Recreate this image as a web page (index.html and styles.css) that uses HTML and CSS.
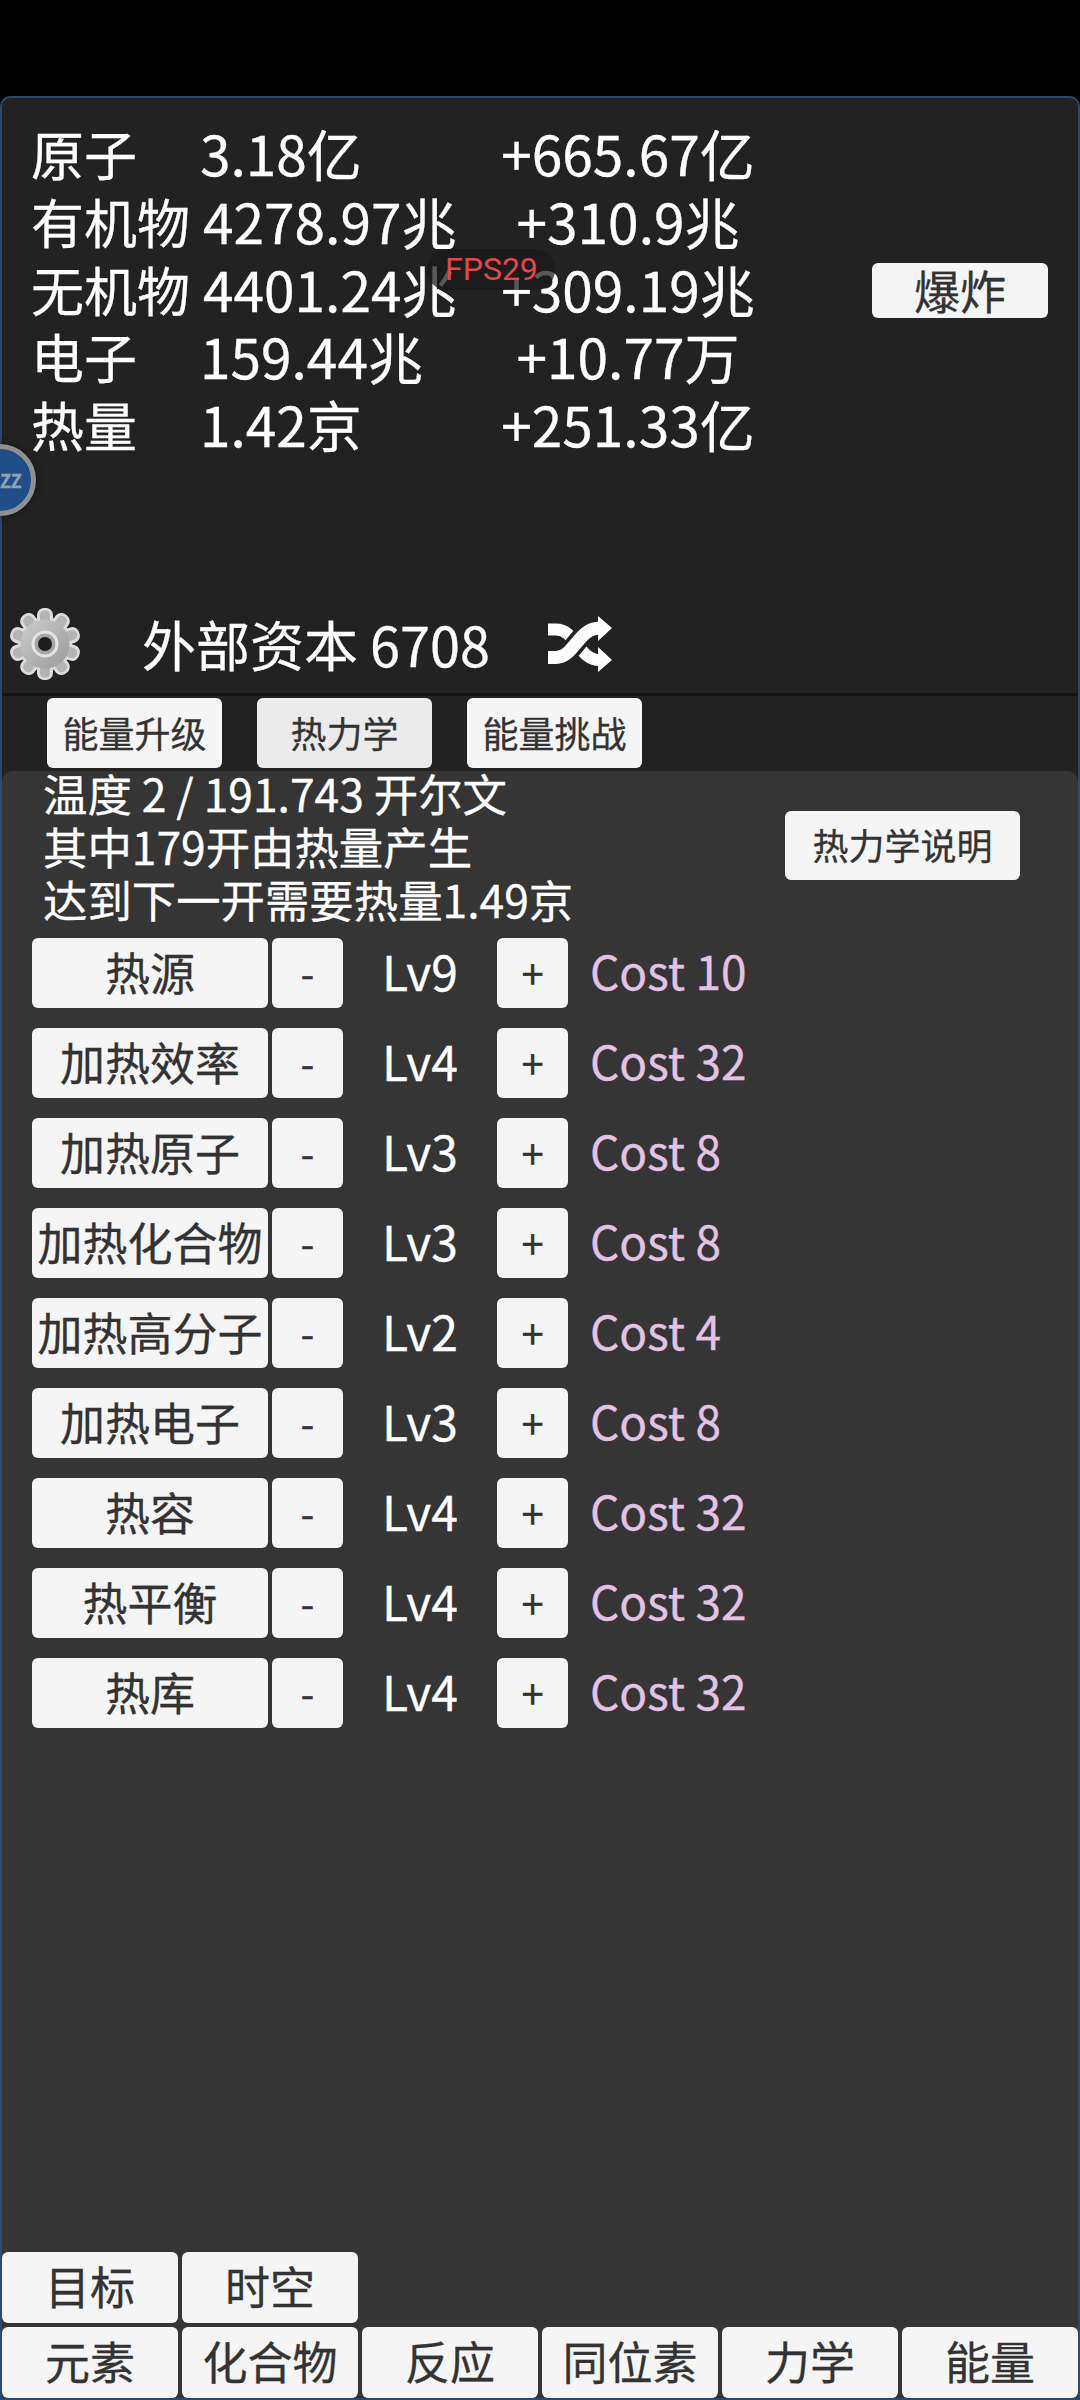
FILE: index.html
```html
<!DOCTYPE html>
<html lang="zh-CN">
<head>
    <meta charset="UTF-8">
    <title>热力学</title>
    <link rel="stylesheet" href="styles.css">
</head>
<body>

<div class="status-bar"></div>

<div class="game">
    <!-- Resources -->
    <div class="resources">
        <div class="res-table">
            <span>原子</span><span class="val">3.18亿</span><span class="val rate">+665.67亿</span>
            <span>有机物</span><span class="val wide">4278.97兆</span><span class="val rate">+310.9兆</span>
            <span>无机物</span><span class="val wide">4401.24兆</span><span class="val rate">+309.19兆</span>
            <span>电子</span><span class="val">159.44兆</span><span class="val rate">+10.77万</span>
            <span>热量</span><span class="val">1.42京</span><span class="val rate">+251.33亿</span>
        </div>
        <button class="btn btn-explode">爆炸</button>
    </div>

    <!-- External capital -->
    <div class="capital">
        <svg class="gear" viewBox="0 0 72 74">
            <defs>
                <linearGradient id="gearFill" x1="0" y1="0" x2="1" y2="1">
                    <stop offset="0" stop-color="#cdcdcd"/>
                    <stop offset="1" stop-color="#9a9a9a"/>
                </linearGradient>
                <rect id="toothOut" x="28" y="1" width="16" height="20" rx="7" fill="#dcdcdc"/>
                <rect id="toothIn" x="31" y="3.5" width="10" height="20" rx="4.5" fill="#b4b4b4"/>
            </defs>
            <use href="#toothOut"/>
            <use href="#toothOut" transform="rotate(36 36 37)"/>
            <use href="#toothOut" transform="rotate(72 36 37)"/>
            <use href="#toothOut" transform="rotate(108 36 37)"/>
            <use href="#toothOut" transform="rotate(144 36 37)"/>
            <use href="#toothOut" transform="rotate(180 36 37)"/>
            <use href="#toothOut" transform="rotate(216 36 37)"/>
            <use href="#toothOut" transform="rotate(252 36 37)"/>
            <use href="#toothOut" transform="rotate(288 36 37)"/>
            <use href="#toothOut" transform="rotate(324 36 37)"/>
            <circle cx="36" cy="37" r="27" fill="#dcdcdc"/>
            <use href="#toothIn"/>
            <use href="#toothIn" transform="rotate(36 36 37)"/>
            <use href="#toothIn" transform="rotate(72 36 37)"/>
            <use href="#toothIn" transform="rotate(108 36 37)"/>
            <use href="#toothIn" transform="rotate(144 36 37)"/>
            <use href="#toothIn" transform="rotate(180 36 37)"/>
            <use href="#toothIn" transform="rotate(216 36 37)"/>
            <use href="#toothIn" transform="rotate(252 36 37)"/>
            <use href="#toothIn" transform="rotate(288 36 37)"/>
            <use href="#toothIn" transform="rotate(324 36 37)"/>
            <circle cx="36" cy="37" r="24.5" fill="url(#gearFill)"/>
            <circle cx="36" cy="37" r="12" fill="#a4a4a4" stroke="#e4e4e4" stroke-width="3"/>
            <circle cx="36" cy="37" r="7" fill="#1c1c1c"/>
        </svg>
        <span class="capital-text">外部资本 6708</span>
        <svg class="shuffle" viewBox="0 0 64 56">
            <path d="M0 13.5 H8 C28 13.5 30 44 52 44" fill="none" stroke="#fff" stroke-width="12"/>
            <path d="M0 41.5 H8 C26 41.5 30 12 52 12" fill="none" stroke="#222" stroke-width="20"/>
            <path d="M0 41.5 H8 C26 41.5 30 12 52 12" fill="none" stroke="#fff" stroke-width="13"/>
            <polygon points="50,0 64,12 50,25" fill="#fff"/>
            <polygon points="50,31 64,44 50,56" fill="#fff"/>
        </svg>
    </div>

    <!-- Energy tabs -->
    <div class="subtabs">
        <button class="btn btn-subtab">能量升级</button>
        <button class="btn btn-subtab active">热力学</button>
        <button class="btn btn-subtab">能量挑战</button>
    </div>

    <div class="content">
        <div class="intro">
            <div class="intro-text">
                <div>温度 2 / 191.743 开尔文</div>
                <div>其中179开由热量产生</div>
                <div>达到下一开需要热量1.49京</div>
            </div>
            <button class="btn btn-help">热力学说明</button>
        </div>

        <div class="upgrades">
            <div class="upgrade">
                <button class="btn btn-name">热源</button>
                <button class="btn btn-step minus">-</button>
                <span class="level">Lv9</span>
                <button class="btn btn-step">+</button>
                <span class="cost">Cost 10</span>
            </div>
            <div class="upgrade">
                <button class="btn btn-name">加热效率</button>
                <button class="btn btn-step minus">-</button>
                <span class="level">Lv4</span>
                <button class="btn btn-step">+</button>
                <span class="cost">Cost 32</span>
            </div>
            <div class="upgrade">
                <button class="btn btn-name">加热原子</button>
                <button class="btn btn-step minus">-</button>
                <span class="level">Lv3</span>
                <button class="btn btn-step">+</button>
                <span class="cost">Cost 8</span>
            </div>
            <div class="upgrade">
                <button class="btn btn-name">加热化合物</button>
                <button class="btn btn-step minus">-</button>
                <span class="level">Lv3</span>
                <button class="btn btn-step">+</button>
                <span class="cost">Cost 8</span>
            </div>
            <div class="upgrade">
                <button class="btn btn-name">加热高分子</button>
                <button class="btn btn-step minus">-</button>
                <span class="level">Lv2</span>
                <button class="btn btn-step">+</button>
                <span class="cost">Cost 4</span>
            </div>
            <div class="upgrade">
                <button class="btn btn-name">加热电子</button>
                <button class="btn btn-step minus">-</button>
                <span class="level">Lv3</span>
                <button class="btn btn-step">+</button>
                <span class="cost">Cost 8</span>
            </div>
            <div class="upgrade">
                <button class="btn btn-name">热容</button>
                <button class="btn btn-step minus">-</button>
                <span class="level">Lv4</span>
                <button class="btn btn-step">+</button>
                <span class="cost">Cost 32</span>
            </div>
            <div class="upgrade">
                <button class="btn btn-name">热平衡</button>
                <button class="btn btn-step minus">-</button>
                <span class="level">Lv4</span>
                <button class="btn btn-step">+</button>
                <span class="cost">Cost 32</span>
            </div>
            <div class="upgrade">
                <button class="btn btn-name">热库</button>
                <button class="btn btn-step minus">-</button>
                <span class="level">Lv4</span>
                <button class="btn btn-step">+</button>
                <span class="cost">Cost 32</span>
            </div>
        </div>

        <!-- Bottom navigation -->
        <div class="nav">
            <div class="nav-row">
                <button class="btn btn-nav">目标</button>
                <button class="btn btn-nav">时空</button>
            </div>
            <div class="nav-row">
                <button class="btn btn-nav">元素</button>
                <button class="btn btn-nav">化合物</button>
                <button class="btn btn-nav">反应</button>
                <button class="btn btn-nav">同位素</button>
                <button class="btn btn-nav">力学</button>
                <button class="btn btn-nav">能量</button>
            </div>
        </div>
    </div>
</div>

<!-- Overlays -->
<div class="fps">FPS29</div>
<div class="float-ball">ZZ</div>

</body>
</html>
```

FILE: styles.css
```css
* {
    box-sizing: border-box;
}
body {
    margin: 0;
    width: 1080px;
    height: 2400px;
    background-color: #000;
    font-family: "Noto Sans CJK SC", "Noto Sans", sans-serif;
    color: #fff;
    -webkit-text-stroke: 0.3px;
    position: relative;
    overflow: hidden;
    display: flex;
    flex-direction: column;
}
.status-bar {
    height: 96px;
    flex: none;
}
.game {
    flex: 1;
    display: flex;
    flex-direction: column;
    min-height: 0;
    background-color: #222;
    border: 2px solid #2b4a70;
    border-radius: 10px 10px 0 0;
}
.btn {
    margin: 0;
    padding: 0;
    border: none;
    border-radius: 6px;
    background-color: #f5f5f5;
    color: #333;
    font-family: inherit;
    white-space: nowrap;
}
.resources {
    flex: none;
    height: 496px;
    display: flex;
    align-items: flex-start;
    padding: 21px 0 0 29px;
}
.res-table {
    display: grid;
    grid-template-columns: 169px 298px 260px;
    align-items: baseline;
    font-size: 53px;
    line-height: 66.8px;
    white-space: nowrap;
}
.val {
    font-size: 55px;
}
.wide {
    padding-left: 3px;
}
.rate {
    text-align: center;
}
.btn-explode {
    width: 176px;
    height: 55px;
    margin: 144px 0 0 114px;
    padding-bottom: 2px;
    font-size: 46px;
    line-height: 53px;
}
.capital {
    flex: none;
    height: 102px;
    display: flex;
    align-items: center;
    border-bottom: 3px solid #141414;
}
.gear {
    width: 72px;
    height: 74px;
    margin-left: 7px;
    flex: none;
}
.capital-text {
    margin-left: 61px;
    font-size: 54px;
    white-space: nowrap;
}
.shuffle {
    width: 64px;
    height: 56px;
    margin-left: 58px;
    flex: none;
}
.subtabs {
    flex: none;
    height: 75px;
    display: flex;
    gap: 35px;
    padding: 2px 0 0 45px;
}
.btn-subtab {
    width: 175px;
    height: 70px;
    padding-bottom: 2px;
    font-size: 36px;
}
.btn-subtab.active {
    background-color: #ebebeb;
}
.content {
    flex: 1;
    min-height: 0;
    display: flex;
    flex-direction: column;
    background-color: #353535;
    border-radius: 10px 10px 0 0;
}
.intro {
    flex: none;
    display: flex;
    align-items: center;
    margin-top: -5px;
    padding-left: 41px;
}
.intro-text {
    width: 742px;
    font-size: 44.4px;
    line-height: 53px;
    white-space: nowrap;
}
.btn-help {
    width: 235px;
    height: 69px;
    padding-bottom: 4px;
    font-size: 36px;
}
.upgrades {
    flex: none;
    margin-top: 13px;
    padding-left: 30px;
    display: flex;
    flex-direction: column;
    gap: 20px;
}
.upgrade {
    height: 70px;
    display: flex;
    align-items: center;
    font-size: 46px;
}
.btn-name {
    width: 236px;
    height: 70px;
    padding-bottom: 4px;
    font-size: 45px;
}
.btn-step {
    width: 71px;
    height: 70px;
    padding-bottom: 3px;
    font-size: 40px;
}
.minus {
    margin-left: 4px;
}
.level {
    width: 154px;
    padding: 0 0 6px 39px;
    font-size: 48px;
}
.cost {
    margin-left: 22px;
    padding-bottom: 6px;
    color: #e3c3e3;
}
.nav {
    margin-top: auto;
    flex: none;
    display: flex;
    flex-direction: column;
    gap: 4px;
}
.nav-row {
    display: flex;
    gap: 4px;
}
.btn-nav {
    width: 176px;
    height: 71px;
    padding-bottom: 4px;
    font-size: 45px;
}
.fps {
    position: absolute;
    left: 427px;
    top: 249px;
    width: 128px;
    height: 41px;
    padding-left: 18px;
    border-radius: 20px;
    background-color: rgba(25, 25, 25, 0.72);
    color: #e2474b;
    -webkit-text-stroke: 0;
    font-family: Roboto, sans-serif;
    font-size: 32px;
    line-height: 41px;
}
.float-ball {
    position: absolute;
    left: -36px;
    top: 444px;
    width: 72px;
    height: 72px;
    border-radius: 50%;
    border: 5px solid #8f9090;
    background-color: #1f4f86;
    box-shadow: 0 0 8px rgba(0, 0, 0, 0.5);
    color: #8fa3b5;
    font-size: 18px;
    font-weight: 700;
    line-height: 62px;
    padding-left: 31px;
}
```
